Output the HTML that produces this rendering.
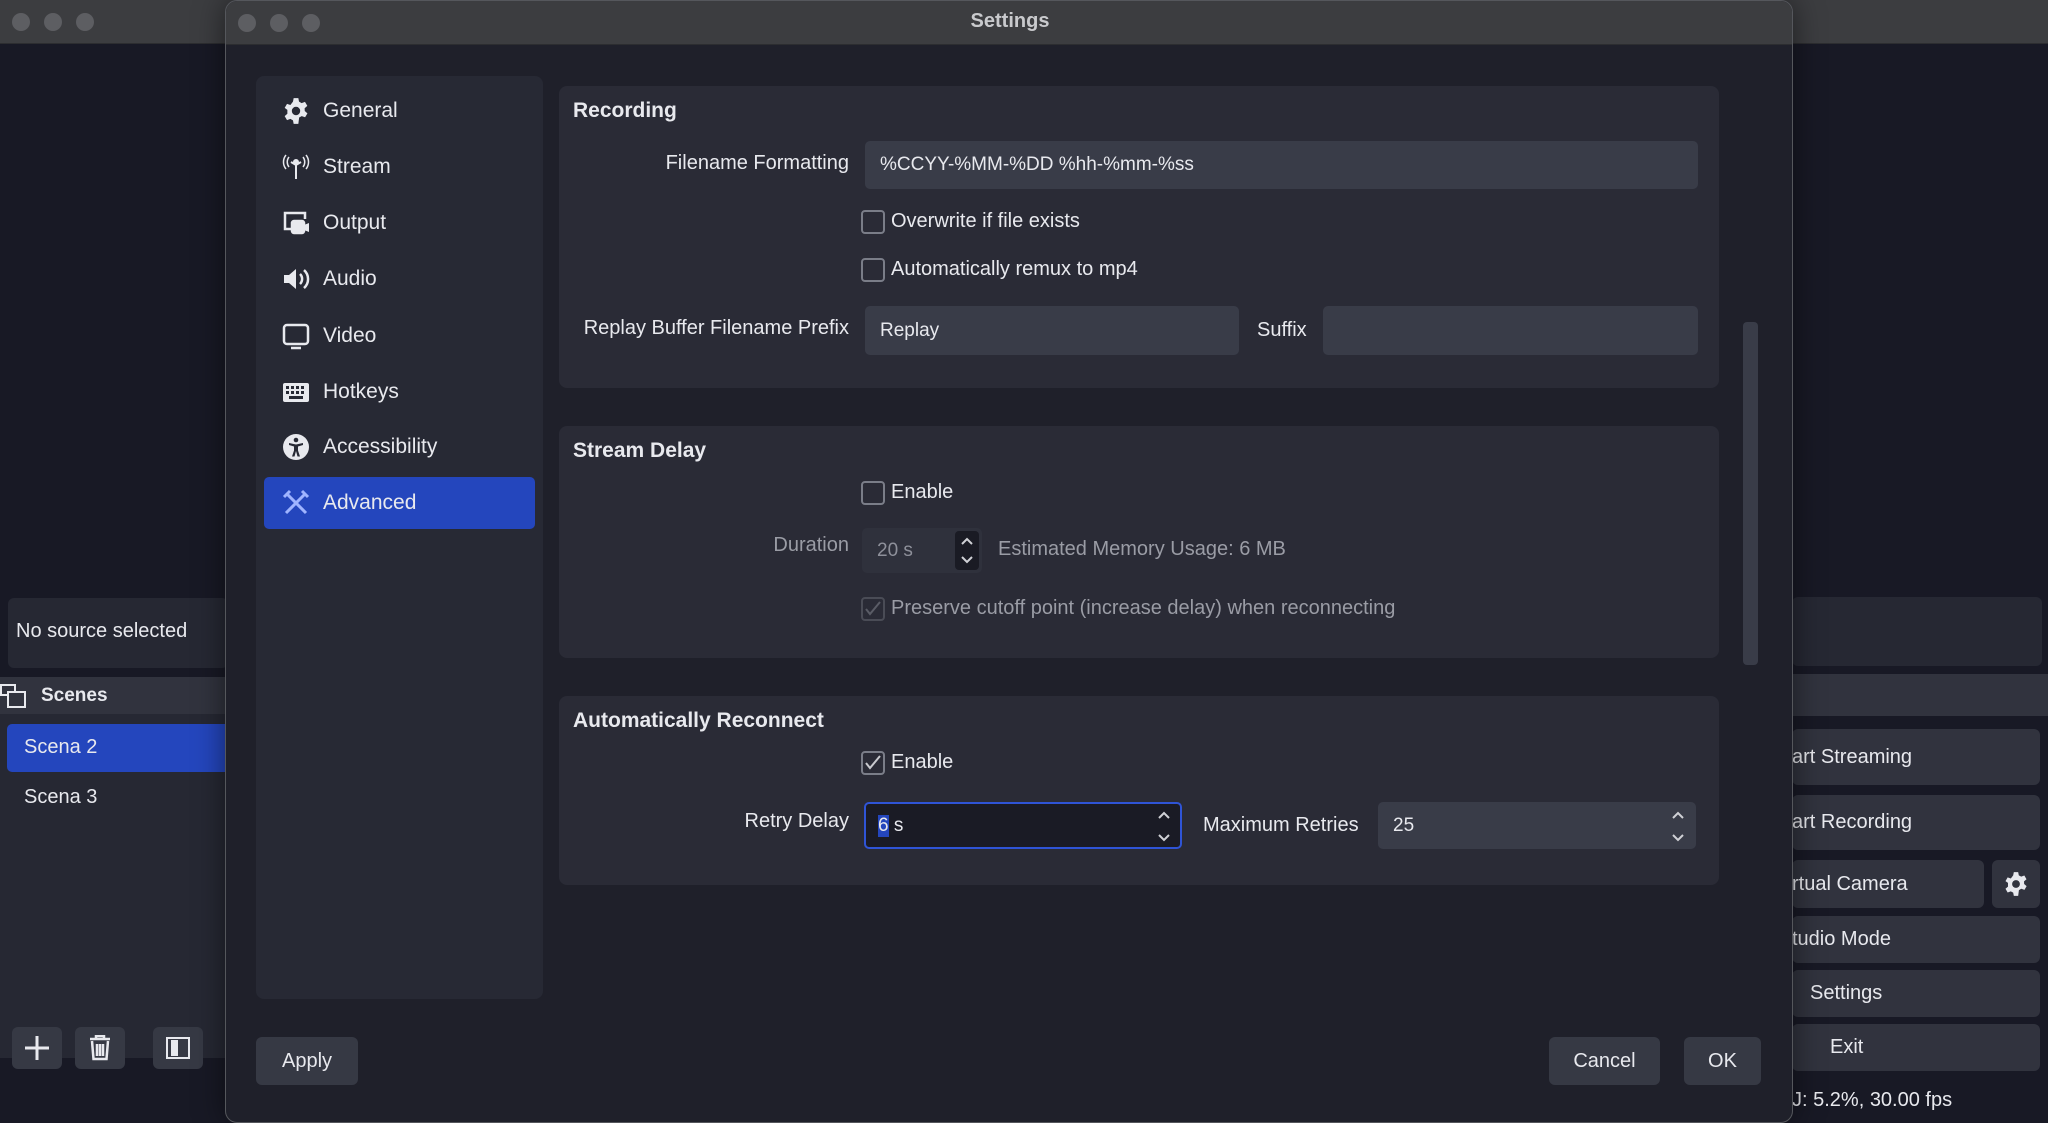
<!DOCTYPE html>
<html><head><meta charset="utf-8"><style>
*{box-sizing:border-box;margin:0;padding:0}
body{width:2048px;height:1123px;overflow:hidden;background:#181925;font-family:"Liberation Sans",sans-serif;color:#e8e9ee;position:relative;font-size:20px}
.a{position:absolute}
.tb{background:#3c3d40;height:44px;border-bottom:1px solid #2c2d30}
.dot{width:18px;height:18px;border-radius:50%;background:#5d5e62;top:13px}
.btn{background:#363944;border-radius:6px;display:flex;align-items:center;justify-content:center;color:#e8e9ee;font-size:20px}
.grp{background:#2a2b36;border-radius:8px}
.inp{background:#393c48;border-radius:5px;display:flex;align-items:center;padding-left:15px;font-size:19px}
.lbl{text-align:right;font-size:20px;line-height:24px}
.cb{width:24px;height:24px;border:2px solid #7a7d88;border-radius:4px}
.h{font-weight:bold;font-size:21px}
.nav{left:282px;display:flex;align-items:center;font-size:21px;height:30px}
.nav svg{width:28px;height:28px;margin-right:13px}
</style></head><body>
<div class="a tb" style="left:0;top:0;width:2048px"></div>
<div class="a dot" style="left:12px"></div><div class="a dot" style="left:44px"></div><div class="a dot" style="left:76px"></div>
<div class="a" style="left:8px;top:598px;width:220px;height:70px;background:#262833;border-radius:6px"></div>
<div class="a" style="left:16px;top:620px;font-size:20px">No source selected</div>
<div class="a" style="left:0;top:677px;width:230px;height:37px;background:#31333e"></div>
<svg class="a" style="left:0;top:684px" width="28" height="26" viewBox="0 0 28 26" fill="none" stroke="#e8e9ee" stroke-width="2"><rect x="1" y="1" width="14" height="10"/><rect x="8" y="8" width="17" height="15" fill="#31333e"/></svg>
<div class="a h" style="left:41px;top:685px;font-size:19px">Scenes</div>
<div class="a" style="left:0;top:714px;width:230px;height:344px;background:#262833"></div>
<div class="a" style="left:7px;top:724px;width:223px;height:48px;background:#2446bd;border-radius:5px 0 0 5px"></div>
<div class="a" style="left:24px;top:736px">Scena 2</div>
<div class="a" style="left:24px;top:786px">Scena 3</div>
<div class="a btn" style="left:12px;top:1027px;width:50px;height:42px"><svg width="26" height="26" viewBox="0 0 26 26" stroke="#e8e9ee" stroke-width="3"><path d="M13 1v24M1 13h24"/></svg></div>
<div class="a btn" style="left:75px;top:1027px;width:50px;height:42px"><svg width="22" height="26" viewBox="0 0 22 26" fill="none" stroke="#e8e9ee" stroke-width="2.5"><path d="M1 4h20M7 4V1h8v3M3 6l1.5 18h13L19 6M8 9v12M11 9v12M14 9v12"/></svg></div>
<div class="a btn" style="left:153px;top:1027px;width:50px;height:42px"><svg width="24" height="22" viewBox="0 0 24 22" fill="none" stroke="#e8e9ee" stroke-width="2"><rect x="1" y="1" width="22" height="20"/><rect x="5" y="3" width="7" height="16" fill="#e8e9ee" stroke="none"/></svg></div>
<div class="a" style="left:1792px;top:597px;width:250px;height:69px;background:#262833;border-radius:6px"></div>
<div class="a" style="left:1792px;top:674px;width:256px;height:42px;background:#31333e"></div>
<div class="a btn" style="left:1792px;top:729px;width:248px;height:56px;justify-content:flex-start;background:#31333e">art Streaming</div>
<div class="a btn" style="left:1792px;top:795px;width:248px;height:55px;justify-content:flex-start;background:#31333e">art Recording</div>
<div class="a btn" style="left:1792px;top:860px;width:192px;height:48px;justify-content:flex-start;background:#31333e">rtual Camera</div>
<div class="a btn" style="left:1992px;top:860px;width:48px;height:48px;background:#31333e"><svg width="26" height="26" viewBox="0 0 24 24"><path fill="#e8e9ee" d="M10 1h4l.6 3 2.2 1.2 2.9-1 2 3.4-2.3 2 .1 2.4 2.3 2-2 3.4-2.9-1-2.2 1.2L14 23h-4l-.6-3-2.2-1.2-2.9 1-2-3.4 2.3-2V11L2.3 9.3l2-3.4 2.9 1L9.4 4z"/><circle cx="12" cy="12" r="3.6" fill="#31333e"/></svg></div>
<div class="a btn" style="left:1792px;top:916px;width:248px;height:47px;justify-content:flex-start;background:#31333e">tudio Mode</div>
<div class="a btn" style="left:1792px;top:970px;width:248px;height:47px;justify-content:flex-start;padding-left:18px;background:#31333e">Settings</div>
<div class="a btn" style="left:1792px;top:1024px;width:248px;height:47px;justify-content:flex-start;padding-left:38px;background:#31333e">Exit</div>
<div class="a" style="left:1792px;top:1089px;font-size:20px">J: 5.2%, 30.00 fps</div>

<div class="a" style="left:225px;top:0;width:1568px;height:1123px;background:#1f202a;border:1px solid #55575c;border-radius:12px;overflow:hidden;box-shadow:0 0 30px rgba(0,0,0,.5)">
 <div class="a tb" style="left:0;top:0;width:1568px"></div>
 <div class="a dot" style="left:12px"></div><div class="a dot" style="left:44px"></div><div class="a dot" style="left:76px"></div>
 <div class="a" style="left:0;width:1568px;top:9px;text-align:center;font-weight:bold;font-size:20px;color:#c9cacd">Settings</div>
</div>
<div class="a" style="left:256px;top:76px;width:287px;height:923px;background:#272934;border-radius:8px"></div>
<div class="a" style="left:264px;top:477px;width:271px;height:52px;background:#2446bd;border-radius:5px"></div>

<div class="a nav" style="top:96px"><svg viewBox="0 0 24 24"><path fill="#e8e9ee" d="M10 1h4l.6 3 2.2 1.2 2.9-1 2 3.4-2.3 2 .1 2.4 2.3 2-2 3.4-2.9-1-2.2 1.2L14 23h-4l-.6-3-2.2-1.2-2.9 1-2-3.4 2.3-2V11L2.3 9.3l2-3.4 2.9 1L9.4 4z"/><circle cx="12" cy="12" r="3.6" fill="#272934"/></svg>General</div>
<div class="a nav" style="top:152px"><svg viewBox="0 0 28 28" fill="none" stroke="#e8e9ee" stroke-width="2"><path d="M14 10v16M9 9l5 3 5-3"/><circle cx="14" cy="9" r="2" fill="#e8e9ee"/><path d="M7 4a8 8 0 0 0 0 10M21 4a8 8 0 0 1 0 10M4 2a11 11 0 0 0 0 14M24 2a11 11 0 0 1 0 14" stroke-width="1.5"/></svg>Stream</div>
<div class="a nav" style="top:208px"><svg viewBox="0 0 28 28" fill="none" stroke="#e8e9ee" stroke-width="2.5"><path d="M10 20H3V4h20v6"/><rect x="10" y="12" width="12" height="12" rx="2" fill="#e8e9ee"/><path d="M22 16l5-2v9l-5-2z" fill="#e8e9ee" stroke="none"/></svg>Output</div>
<div class="a nav" style="top:264px"><svg viewBox="0 0 28 28"><path fill="#e8e9ee" d="M2 10h5l7-6v20l-7-6H2z"/><path d="M18 9a7 7 0 0 1 0 10M22 5a12 12 0 0 1 0 18" fill="none" stroke="#e8e9ee" stroke-width="2.5"/></svg>Audio</div>
<div class="a nav" style="top:321px"><svg viewBox="0 0 28 28" fill="none" stroke="#e8e9ee" stroke-width="2.5"><rect x="2" y="3" width="24" height="19" rx="3"/><path d="M9 26h10"/></svg>Video</div>
<div class="a nav" style="top:377px"><svg viewBox="0 0 28 28"><rect x="1" y="5" width="26" height="19" rx="2" fill="#e8e9ee"/><g fill="#272934"><rect x="4" y="8" width="3" height="3"/><rect x="9" y="8" width="3" height="3"/><rect x="14" y="8" width="3" height="3"/><rect x="19" y="8" width="3" height="3"/><rect x="4" y="13" width="3" height="3"/><rect x="9" y="13" width="3" height="3"/><rect x="14" y="13" width="3" height="3"/><rect x="19" y="13" width="3" height="3"/><rect x="7" y="18" width="14" height="3"/></g></svg>Hotkeys</div>
<div class="a nav" style="top:432px"><svg viewBox="0 0 28 28"><circle cx="14" cy="14" r="13" fill="#e8e9ee"/><circle cx="14" cy="7" r="2.3" fill="#272934"/><path d="M7 10l7 1.5 7-1.5v2l-5 1.5v4l2 6h-2.5L14 18l-1.5 5.5H10l2-6v-4L7 12z" fill="#272934"/></svg>Accessibility</div>
<div class="a nav" style="top:488px"><svg viewBox="0 0 28 28" stroke="#9fb4ff" stroke-width="3" fill="none"><path d="M4 24L24 4M20 2l6 6M4 4l20 20M2 8l6-6"/></svg>Advanced</div>

<div class="a grp" style="left:559px;top:86px;width:1160px;height:302px"></div>
<div class="a h" style="left:573px;top:99px">Recording</div>
<div class="a lbl" style="left:560px;width:289px;top:151px">Filename Formatting</div>
<div class="a inp" style="left:865px;top:141px;width:833px;height:48px">%CCYY-%MM-%DD %hh-%mm-%ss</div>
<div class="a cb" style="left:861px;top:210px"></div><div class="a" style="left:891px;top:210px">Overwrite if file exists</div>
<div class="a cb" style="left:861px;top:258px"></div><div class="a" style="left:891px;top:258px">Automatically remux to mp4</div>
<div class="a lbl" style="left:560px;width:289px;top:316px">Replay Buffer Filename Prefix</div>
<div class="a inp" style="left:865px;top:306px;width:374px;height:49px">Replay</div>
<div class="a" style="left:1257px;top:319px">Suffix</div>
<div class="a inp" style="left:1323px;top:306px;width:375px;height:49px"></div>
<div class="a" style="left:1743px;top:322px;width:15px;height:343px;background:#393c48;border-radius:4px"></div>

<div class="a grp" style="left:559px;top:426px;width:1160px;height:232px"></div>
<div class="a h" style="left:573px;top:439px">Stream Delay</div>
<div class="a cb" style="left:861px;top:481px"></div><div class="a" style="left:891px;top:481px">Enable</div>
<div class="a lbl" style="left:560px;width:289px;top:533px;color:#9a9ca5">Duration</div>
<div class="a inp" style="left:862px;top:528px;width:120px;height:45px;background:#2f313c;color:#8e909a">20 s</div>
<div class="a" style="left:955px;top:531px;width:24px;height:39px;background:#1a1b24;border-radius:4px"><svg width="24" height="39" viewBox="0 0 24 39" fill="none" stroke="#d0d1d6" stroke-width="2"><path d="M7 13l5-5 5 5M7 26l5 5 5-5"/></svg></div>
<div class="a" style="left:998px;top:538px;color:#9a9ca5">Estimated Memory Usage: 6 MB</div>
<div class="a cb" style="left:861px;top:597px;border-color:#4a4c56"><svg width="20" height="20" viewBox="0 0 20 20" fill="none" stroke="#5a5c66" stroke-width="2"><path d="M3 10l4 5 10-12"/></svg></div>
<div class="a" style="left:891px;top:597px;color:#9a9ca5">Preserve cutoff point (increase delay) when reconnecting</div>

<div class="a grp" style="left:559px;top:696px;width:1160px;height:189px"></div>
<div class="a h" style="left:573px;top:709px">Automatically Reconnect</div>
<div class="a cb" style="left:861px;top:751px"><svg width="20" height="20" viewBox="0 0 20 20" fill="none" stroke="#c8c9ce" stroke-width="2"><path d="M3 10l4 5 10-12"/></svg></div><div class="a" style="left:891px;top:751px">Enable</div>
<div class="a lbl" style="left:560px;width:289px;top:809px">Retry Delay</div>
<div class="a inp" style="left:864px;top:802px;width:318px;height:47px;background:#1a1b25;border:2px solid #2f54d6;padding-left:12px"><span style="background:#2446bd">6</span>&nbsp;s</div>
<svg class="a" style="left:1154px;top:806px" width="20" height="40" viewBox="0 0 20 40" fill="none" stroke="#d0d1d6" stroke-width="2"><path d="M5 12l5-5 5 5M5 29l5 5 5-5"/></svg>
<div class="a" style="left:1203px;top:814px">Maximum Retries</div>
<div class="a inp" style="left:1378px;top:802px;width:318px;height:47px">25</div>
<svg class="a" style="left:1668px;top:806px" width="20" height="40" viewBox="0 0 20 40" fill="none" stroke="#d0d1d6" stroke-width="2"><path d="M5 12l5-5 5 5M5 29l5 5 5-5"/></svg>

<div class="a btn" style="left:256px;top:1037px;width:102px;height:48px">Apply</div>
<div class="a btn" style="left:1549px;top:1037px;width:111px;height:48px">Cancel</div>
<div class="a btn" style="left:1684px;top:1037px;width:77px;height:48px">OK</div>
</body></html>
